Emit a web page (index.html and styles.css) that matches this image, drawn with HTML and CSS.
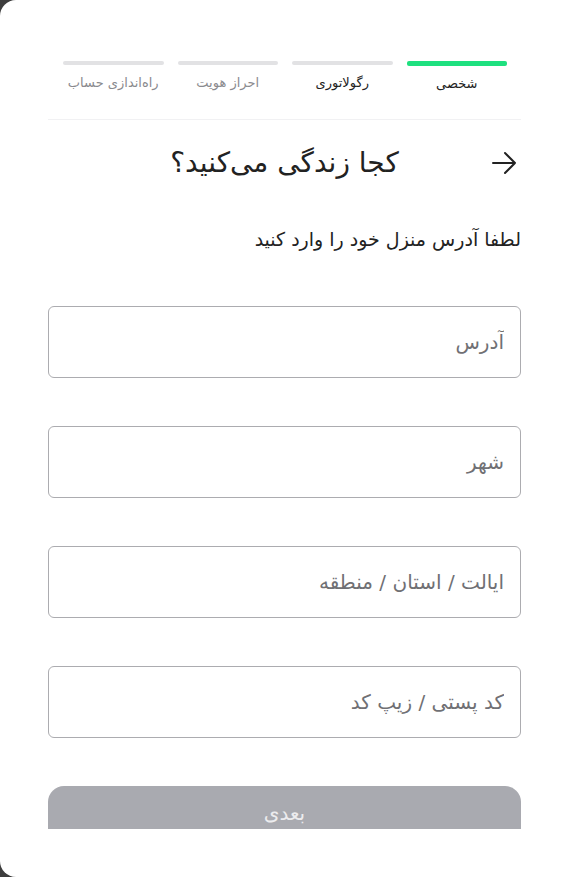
FILE: index.html
```html
<!DOCTYPE html>
<html lang="fa" dir="rtl">
<head>
<meta charset="utf-8">
<title>کجا زندگی می‌کنید؟</title>
<link rel="stylesheet" href="styles.css">
</head>
<body>
<div class="card">
  <div class="steps">
    <div class="step"><div class="bar active"></div><div class="label dark">شخصی</div></div>
    <div class="step"><div class="bar"></div><div class="label dark">رگولاتوری</div></div>
    <div class="step"><div class="bar"></div><div class="label">احراز هویت</div></div>
    <div class="step"><div class="bar"></div><div class="label">راه‌اندازی حساب</div></div>
  </div>
  <div class="header">
    <svg class="back" width="26" height="24" viewBox="0 0 26 24" fill="none" stroke="#222" stroke-width="2" stroke-linecap="round" stroke-linejoin="round">
      <path d="M2 12H24M14 2L24 12L14 22"/>
    </svg>
    <h1 class="title">کجا زندگی می‌کنید؟</h1>
    <span class="spacer"></span>
  </div>
  <p class="subtitle">لطفا آدرس منزل خود را وارد کنید</p>
  <div class="fields">
    <input class="field" placeholder="آدرس">
    <input class="field" placeholder="شهر">
    <input class="field" placeholder="ایالت / استان / منطقه">
    <input class="field" placeholder="کد پستی / زیپ کد">
  </div>
  <div class="btn-wrap"><button class="btn">بعدی</button></div>
</div>
</body>
</html>
```
FILE: styles.css
```css
html, body { margin: 0; padding: 0; }
body {
  background: #3d3d3d;
  font-family: "DejaVu Sans", "Noto Sans", sans-serif;
  direction: rtl;
}
.card {
  background: #fff;
  height: 877px;
  border-radius: 16px 0 0 16px;
  padding: 0 43px 0 48px;
  box-sizing: border-box;
  overflow: hidden;
}
.steps {
  display: grid;
  grid-template-columns: repeat(4, 1fr);
  column-gap: 14px;
  padding: 61px 14px 28px 15px;
  border-bottom: 1px solid #f1f1f3;
  height: 120px;
  box-sizing: border-box;
}
.step { display: flex; flex-direction: column; align-items: center; }
.bar { width: 100%; height: 4px; border-radius: 2px; background: #e2e2e4; }
.bar.active { background: #1ee07f; height: 5px; }
.label {
  margin-top: 9px;
  font-size: 13px;
  line-height: 18px;
  color: #8a8a8e;
  white-space: nowrap;
}
.label.dark { color: #222; }
.header {
  height: 86px;
  display: flex;
  align-items: center;
  justify-content: space-between;
}
.back { width: 26px; height: 24px; margin-right: 4px; }
.spacer { width: 30px; }
.title {
  margin: 0;
  font-size: 28px;
  font-weight: normal;
  color: #222;
  line-height: 38px;
}
.subtitle {
  margin: 19px 0 0;
  font-size: 19px;
  line-height: 28px;
  color: #222;
}
.fields {
  display: flex;
  flex-direction: column;
  gap: 48px;
  margin-top: 53px;
}
.field {
  height: 72px;
  box-sizing: border-box;
  border: 1.5px solid #acacb0;
  border-radius: 6px;
  padding: 0 16px;
  font-family: inherit;
  font-size: 20px;
  color: #222;
  direction: rtl;
  outline: none;
}
.field::placeholder { color: #707074; }
.btn-wrap {
  margin-top: 48px;
  height: 43px;
  overflow: hidden;
}
.btn {
  display: block;
  width: 100%;
  height: 54px;
  border: none;
  border-radius: 16px 16px 0 0;
  background: #a9aab0;
  color: #ececee;
  font-family: inherit;
  font-size: 20px;
}
```
